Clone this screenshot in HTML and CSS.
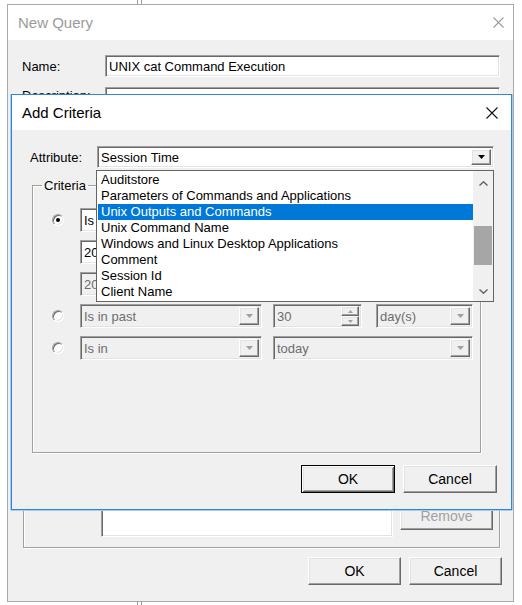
FILE: index.html
```html
<!DOCTYPE html>
<html>
<head>
<meta charset="utf-8">
<title>New Query</title>
<link rel="stylesheet" href="styles.css">
</head>
<body>
<div class="strip top"><span class="edge"></span></div>
<div class="win nq">
  <div class="titlebar inactive">
    <span class="title">New Query</span>
    <svg class="close nq-close" viewBox="0 0 11 11"><path d="M0.5 0.5 L10.5 10.5 M10.5 0.5 L0.5 10.5"/></svg>
  </div>
  <div class="nq-body">
    <div class="field-row">
      <span class="lbl">Name:</span>
      <div class="textbox sunken">UNIX cat Command Execution</div>
    </div>
    <div class="field-row desc-row">
      <span class="lbl desc-lbl">Description:</span>
      <div class="textbox sunken"></div>
    </div>
    <div class="nq-group">
      <div class="nq-list-row">
        <div class="listbox sunken"></div>
        <button class="btn raised disabled remove">Remove</button>
      </div>
    </div>
    <div class="btn-row nq-btns">
      <button class="btn raised">OK</button>
      <button class="btn raised">Cancel</button>
    </div>
  </div>
</div>
<div class="strip bottom"><span class="edge"></span></div>

<div class="win dlg">
  <div class="titlebar">
    <span class="title">Add Criteria</span>
    <svg class="close dlg-close" viewBox="0 0 12 12"><path d="M0.5 0.5 L11.5 11.5 M11.5 0.5 L0.5 11.5"/></svg>
  </div>
  <div class="dlg-body">
    <div class="attr-row">
      <span class="attr-lbl">Attribute:</span>
      <div class="combo sunken attr-combo">
        <span class="combo-text">Session Time</span>
        <span class="dd-btn raised"><svg class="tri" viewBox="0 0 7 4"><polygon points="0,0 7,0 3.5,4"/></svg></span>
        <div class="dropdown">
          <div class="dd-items">
            <div class="dd-item">Auditstore</div>
            <div class="dd-item">Parameters of Commands and Applications</div>
            <div class="dd-item sel">Unix Outputs and Commands</div>
            <div class="dd-item">Unix Command Name</div>
            <div class="dd-item">Windows and Linux Desktop Applications</div>
            <div class="dd-item">Comment</div>
            <div class="dd-item">Session Id</div>
            <div class="dd-item">Client Name</div>
          </div>
          <div class="vscroll">
            <div class="sb-arrow up"><svg viewBox="0 0 9 5"><polyline points="0.5,4.5 4.5,0.8 8.5,4.5"/></svg></div>
            <div class="sb-track"><div class="sb-thumb"></div></div>
            <div class="sb-arrow down"><svg viewBox="0 0 9 5"><polyline points="0.5,0.5 4.5,4.2 8.5,0.5"/></svg></div>
          </div>
        </div>
      </div>
    </div>

    <fieldset class="criteria">
      <legend>Criteria</legend>
      <div class="crit-rows">
        <div class="crit-row">
          <span class="radio checked"></span>
          <div class="combo sunken w182"><span class="combo-text">Is</span><span class="dd-btn raised"><svg class="tri" viewBox="0 0 7 4"><polygon points="0,0 7,0 3.5,4"/></svg></span></div>
        </div>
        <div class="crit-row">
          <span class="radio-space"></span>
          <div class="combo sunken w182"><span class="combo-text">20</span></div>
        </div>
        <div class="crit-row">
          <span class="radio-space"></span>
          <div class="combo sunken w182 off"><span class="combo-text">20</span></div>
        </div>
        <div class="crit-row">
          <span class="radio"></span>
          <div class="combo sunken w182 off"><span class="combo-text">Is in past</span><span class="dd-btn raised"><svg class="tri" viewBox="0 0 7 4"><polygon points="0,0 7,0 3.5,4"/></svg></span></div>
          <div class="combo sunken spin off"><span class="combo-text">30</span>
            <span class="spin-btns">
              <span class="spin-b raised"><svg viewBox="0 0 5 3"><polygon points="0,3 5,3 2.5,0"/></svg></span>
              <span class="spin-b raised"><svg viewBox="0 0 5 3"><polygon points="0,0 5,0 2.5,3"/></svg></span>
            </span>
          </div>
          <div class="combo sunken w97 off"><span class="combo-text">day(s)</span><span class="dd-btn raised"><svg class="tri" viewBox="0 0 7 4"><polygon points="0,0 7,0 3.5,4"/></svg></span></div>
        </div>
        <div class="crit-row">
          <span class="radio"></span>
          <div class="combo sunken w182 off"><span class="combo-text">Is in</span><span class="dd-btn raised"><svg class="tri" viewBox="0 0 7 4"><polygon points="0,0 7,0 3.5,4"/></svg></span></div>
          <div class="combo sunken w200 off"><span class="combo-text">today</span><span class="dd-btn raised"><svg class="tri" viewBox="0 0 7 4"><polygon points="0,0 7,0 3.5,4"/></svg></span></div>
        </div>
      </div>
    </fieldset>

    <div class="btn-row dlg-btns">
      <button class="btn default">OK</button>
      <button class="btn raised cancel">Cancel</button>
    </div>
  </div>
</div>
</body>
</html>
```

FILE: styles.css
```css
* { box-sizing: border-box; }
html, body { margin: 0; padding: 0; background: #fff; }
body {
  width: 522px;
  height: 605px;
  position: relative;
  overflow: hidden;
  font-family: "Liberation Sans", Arial, sans-serif;
  font-size: 13px;
  color: #000;
}

/* background window edges */
.strip { height: 4px; }
.strip.bottom { height: 3px; }
.strip .edge {
  display: block;
  margin-left: 137px;
  width: 5px;
  height: 100%;
  border-left: 1px solid #9a9a9a;
  border-right: 1px solid #9a9a9a;
}

/* windows */
.win { background: #f0f0f0; display: flex; flex-direction: column; }
.nq {
  margin-left: 7px;
  width: 507px;
  height: 598px;
  border: 1px solid #a9a9a9;
}
.titlebar {
  height: 35px;
  flex: none;
  background: #fff;
  display: flex;
  align-items: center;
  justify-content: space-between;
  padding: 0 9px 0 10px;
}
.title { font-size: 15px; }
.inactive .title { color: #9b9b9b; }
.close { fill: none; stroke-width: 1.1; }
.nq-close { width: 11px; height: 11px; stroke: #9b9b9b; }
.dlg-close { width: 12px; height: 12px; stroke: #111; margin-right: 4px; }

/* 3D borders */
.sunken {
  border: 1px solid;
  border-color: #a0a0a0 #fff #fff #a0a0a0;
  box-shadow: inset 1px 1px 0 #696969, inset -1px -1px 0 #e3e3e3;
}
.raised {
  border: 1px solid;
  border-color: #fff #696969 #696969 #fff;
  box-shadow: inset -1px -1px 0 #a0a0a0, inset 1px 1px 0 #e3e3e3;
  background: #f0f0f0;
}

/* New Query body */
.nq-body {
  flex: 1;
  display: flex;
  flex-direction: column;
  padding: 15px 13px 16px 14px;
}
.field-row { display: flex; align-items: center; height: 22px; flex: none; }
.field-row .lbl { width: 83px; flex: none; }
.desc-row { margin-top: 10px; align-items: flex-start; }
.desc-lbl { margin-top: 1px; }
.textbox {
  flex: 1;
  height: 22px;
  background: #fff;
  padding: 0 3px;
  display: flex;
  align-items: center;
}
.nq-group {
  flex: 1;
  margin: 10px 0 0 1px;
  border: 1px solid #a0a0a0;
  box-shadow: inset 1px 1px 0 #fff, 1px 1px 0 #fff;
  display: flex;
  flex-direction: column;
  justify-content: flex-end;
  padding: 0 6px 10px 77px;
}
.nq-list-row { display: flex; align-items: flex-start; gap: 7px; }
.listbox { width: 292px; height: 60px; background: #fff; }
.remove { margin-top: 25px; }

.btn {
  font-family: "Liberation Sans", Arial, sans-serif;
  font-size: 14px;
  color: #000;
  width: 93px;
  height: 28px;
  padding: 0;
  display: flex;
  align-items: center;
  justify-content: center;
  flex: none;
}
.btn.disabled { color: #a0a0a0; }
.btn-row { display: flex; justify-content: flex-end; gap: 8px; flex: none; }
.nq-btns { margin: 9px -2px 0 0; }

/* Add Criteria dialog */
.dlg {
  position: absolute;
  left: 11px;
  top: 94px;
  width: 501px;
  height: 416px;
  border: 1px solid #2f86d6;
  box-shadow: -1px 0 0 #a6cdef, 1px 0 0 #a6cdef, 0 1px 0 #a6cdef;
}
.dlg .titlebar { padding: 0 9px 0 10px; }
.dlg-body {
  flex: 1;
  display: flex;
  flex-direction: column;
  padding: 16px 14px 16px 18px;
}
.attr-row { display: flex; align-items: center; height: 22px; flex: none; margin-right: 3px; position: relative; z-index: 5; }
.attr-lbl { width: 67px; flex: none; }

.combo {
  position: relative;
  height: 24px;
  background: #fff;
  display: flex;
  align-items: center;
  padding: 0 2px 0 3px;
  flex: none;
}
.combo.off { background: #f0f0f0; color: #6d6d6d; }
.combo-text { flex: 1; white-space: nowrap; overflow: hidden; }
.attr-combo { flex: 1; height: 22px; z-index: 5; }
.dd-btn {
  width: 20px;
  height: calc(100% - 4px);
  flex: none;
  display: flex;
  align-items: center;
  justify-content: center;
}
.tri { width: 7px; height: 4px; fill: #000; }
.off .tri { fill: #a0a0a0; }

.w182 { width: 182px; }
.w97 { width: 97px; }
.w200 { width: 200px; }
.spin { width: 89px; }
.spin-btns { display: flex; flex-direction: column; width: 18px; height: 20px; flex: none; }
.spin-b { flex: 1; display: flex; align-items: center; justify-content: center; }
.spin-b svg { width: 5px; height: 3px; fill: #a0a0a0; }

/* dropdown list */
.dropdown {
  position: absolute;
  z-index: 10;
  left: -2px;
  top: 23px;
  width: 398px;
  height: 132px;
  background: #fff;
  border: 1px solid #646464;
  padding: 1px 0;
  display: flex;
  color: #000;
}
.dd-items { flex: 1; padding-left: 1px; }
.dd-item { height: 16px; line-height: 16px; padding-left: 3px; white-space: nowrap; }
.dd-item.sel { background: #0078d7; color: #fff; }
.vscroll { width: 20px; flex: none; background: #f0f0f0; display: flex; flex-direction: column; margin: -1px 0; }
.sb-arrow { display: flex; align-items: center; justify-content: center; flex: none; }
.sb-arrow.up { height: 25px; }
.sb-arrow.down { height: 20px; }
.sb-arrow svg { width: 9px; height: 5px; fill: none; stroke: #5f5f5f; stroke-width: 1.4; }
.sb-track { flex: 1; padding: 30px 1px 0 1px; }
.sb-thumb { height: 39px; background: #a6a6a6; }

/* criteria group */
.criteria {
  margin: 10px 16px 0 2px;
  padding: 0 0 0 9px;
  height: 275px;
  flex: none;
  border: 1px solid #a0a0a0;
  box-shadow: inset 1px 1px 0 #fff, 1px 1px 0 #fff;
  min-width: 0;
}
.criteria legend {
  padding: 0 2px;
  line-height: 15px;
  font-size: 13px;
}
.crit-rows { margin-top: 15px; display: flex; flex-direction: column; gap: 8px; }
.crit-row { display: flex; align-items: center; height: 24px; }
.crit-row .combo + .combo { margin-left: 11px; }
.crit-row .spin + .combo { margin-left: 14px; }
.radio {
  width: 12px;
  height: 12px;
  margin: 0 16px 0 10px;
  flex: none;
  border-radius: 50%;
  background: #fff;
  border: 1px solid;
  border-color: #a0a0a0 #fff #fff #a0a0a0;
  box-shadow: inset 1px 1px 0 #696969, inset -1px -1px 0 #e3e3e3;
  display: flex;
  align-items: center;
  justify-content: center;
}
.radio.checked::after {
  content: "";
  width: 4px;
  height: 4px;
  border-radius: 50%;
  background: #000;
}
.radio-space { width: 38px; flex: none; }

.dlg-btns { margin-top: 12px; gap: 8px; }
.btn.default {
  width: 94px;
  border: 1px solid #000;
  background: #f0f0f0;
  box-shadow: inset 1px 1px 0 #fff, inset -1px -1px 0 #696969, inset 2px 2px 0 #e3e3e3, inset -2px -2px 0 #a0a0a0;
}
.cancel { width: 94px; }
```
